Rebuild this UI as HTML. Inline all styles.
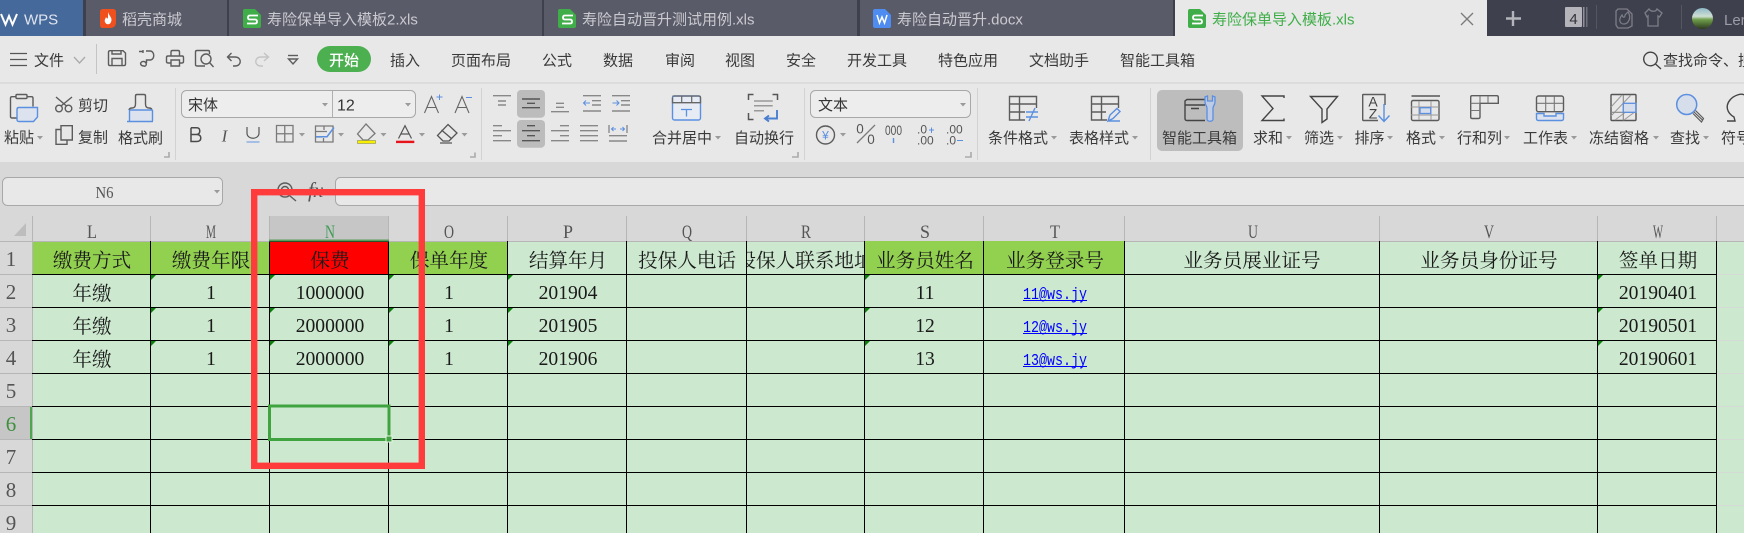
<!DOCTYPE html>
<html><head><meta charset="utf-8"><style>
html,body{margin:0;padding:0;width:1744px;height:533px;overflow:hidden;background:#d8d8d8}
svg{display:block;position:absolute;left:0;top:0}
.s{font-family:"Liberation Sans","Noto Sans CJK SC",sans-serif}
.t{font-size:15px;fill:#3a3a3a}
.tb{font-size:15px;fill:#c9cad0}
.c{font-family:"Liberation Serif","Noto Serif CJK SC",serif;font-size:19.6px;fill:#1a1a1a;text-anchor:middle}
.h{font-family:"Liberation Serif",serif;font-size:19px;fill:#555;text-anchor:middle}
.r{font-family:"Liberation Serif",serif;font-size:21px;fill:#555;text-anchor:middle}
.i{fill:none;stroke:#5c5c5c;stroke-width:1.4}
.b{fill:none;stroke:#5b8fe0;stroke-width:1.4}
.f{fill:#dde3ee;stroke:#5b8fe0;stroke-width:1.4}
.g{fill:none;stroke:#7a7a7a;stroke-width:1.3}
.a{fill:#9a9a9a;stroke:none}
</style></head><body>
<svg width="1744" height="533" viewBox="0 0 1744 533" xmlns="http://www.w3.org/2000/svg" class="s">
<defs>
<linearGradient id="av" x1="0" y1="0" x2="0" y2="1"><stop offset="0" stop-color="#8fb8c8"/><stop offset=".4" stop-color="#cfe0d4"/><stop offset=".55" stop-color="#6f9e4c"/><stop offset="1" stop-color="#2e3a20"/></linearGradient>
<clipPath id="cr"><rect x="747" y="242" width="117" height="32"/></clipPath>
</defs>
<!-- backgrounds -->
<rect x="0" y="0" width="1744" height="36" fill="#3e404d"/>
<rect x="0" y="0" width="83" height="36" fill="#46699b"/>
<rect x="86" y="0" width="141" height="36" fill="#5a5b68"/>
<rect x="229" y="0" width="313" height="36" fill="#5a5b68"/>
<rect x="544" y="0" width="313" height="36" fill="#5a5b68"/>
<rect x="860" y="0" width="313" height="36" fill="#5a5b68"/>
<rect x="1175" y="0" width="312" height="36" fill="#e8e8e8"/>
<rect x="0" y="36" width="1744" height="126" fill="#e8e8e8"/>
<rect x="0" y="82" width="1744" height="2" fill="#dcdcdc"/>
<rect x="0" y="162" width="1744" height="79" fill="#d8d8d8"/>
<!-- tab bar -->
<path d="M1 14L5.5 24.5L9 16L12.5 24.5L17 14" fill="none" stroke="#fff" stroke-width="2"/>
<text x="24" y="24.5" font-size="15" fill="#dfe4ee">WPS</text>
<path d="M103 9H113Q116 9 116 12V22Q116 28 110 28H103Q100 28 100 25V12Q100 9 103 9Z" fill="#f0501e"/>
<path d="M108 12C109 16 113 18 111 22C110 25 106 25 105 22C104 20 106 18 106 17C107 19 108 19 108 17Z" fill="#fff"/>
<text x="122" y="24.5" class="tb">稻壳商城</text>
<g id="sg"><path d="M245 9H255L261 15V26Q261 28 259 28H245Q243 28 243 26V11Q243 9 245 9Z" fill="#3fae49"/><path d="M258 15.5H250Q248 15.5 248 17.5V17.6Q248 19.5 250 19.5H255Q257 19.5 257 21.5V21.6Q257 23.5 255 23.5H247" fill="none" stroke="#fff" stroke-width="1.8"/></g>
<text x="267" y="24.5" class="tb">寿险保单导入模板2.xls</text>
<g transform="translate(315 0)"><path d="M245 9H255L261 15V26Q261 28 259 28H245Q243 28 243 26V11Q243 9 245 9Z" fill="#3fae49"/><path d="M258 15.5H250Q248 15.5 248 17.5V17.6Q248 19.5 250 19.5H255Q257 19.5 257 21.5V21.6Q257 23.5 255 23.5H247" fill="none" stroke="#fff" stroke-width="1.8"/></g>
<text x="582" y="24.5" class="tb">寿险自动晋升测试用例.xls</text>
<path d="M875 9H885L891 15V26Q891 28 889 28H875Q873 28 873 26V11Q873 9 875 9Z" fill="#4f8cf2"/><path d="M877 15L879.5 23L882 17L884.5 23L887 15" fill="none" stroke="#fff" stroke-width="1.5"/>
<text x="897" y="24.5" class="tb">寿险自动晋升.docx</text>
<g transform="translate(945 0)"><path d="M245 9H255L261 15V26Q261 28 259 28H245Q243 28 243 26V11Q243 9 245 9Z" fill="#3fae49"/><path d="M258 15.5H250Q248 15.5 248 17.5V17.6Q248 19.5 250 19.5H255Q257 19.5 257 21.5V21.6Q257 23.5 255 23.5H247" fill="none" stroke="#fff" stroke-width="1.8"/></g>
<text x="1212" y="24.5" font-size="15" fill="#3fae49">寿险保单导入模板.xls</text>
<path d="M1461 13L1473 25M1473 13L1461 25" stroke="#7a7a7a" stroke-width="1.3"/>
<path d="M1513 11V26M1506 18.5H1521" stroke="#b4b5bb" stroke-width="2.4"/>
<rect x="1565" y="7" width="17" height="20" rx="1" fill="#b4b4ba"/><rect x="1583" y="7" width="1.5" height="20" fill="#8f9098"/><rect x="1586" y="7" width="1.5" height="20" fill="#6f707a"/>
<text x="1573.5" y="24" font-size="15" fill="#33343c" text-anchor="middle">4</text>
<rect x="1596" y="5" width="1" height="24" fill="#55565f"/>
<path d="M1618 9H1627L1632 14V26L1628 28H1618L1616 25V11Z" fill="none" stroke="#7d7e87" stroke-width="1.3"/>
<path d="M1628 12C1632 18 1628 24 1624 24C1620 24 1618 20 1622 15C1623 18 1625 18 1625 15Z" fill="none" stroke="#7d7e87" stroke-width="1.2"/>
<path d="M1649 9L1645 13L1647 17L1648 16V26H1658V16L1659.5 17L1662 13L1657 9C1656 12 1651 12 1649 9Z" fill="none" stroke="#7d7e87" stroke-width="1.3"/>
<rect x="1681" y="5" width="1" height="24" fill="#55565f"/>
<circle cx="1702.5" cy="18.5" r="10.5" fill="url(#av)"/>
<text x="1724" y="25" font-size="15" fill="#9b9ca5">Ler</text>

<!-- menu row -->
<path d="M10 53.5H27M10 59.5H27M10 65.5H27" stroke="#555" stroke-width="1.3"/>
<text x="34" y="65.5" class="t">文件</text>
<path d="M74 57L79.5 63L85 57" fill="none" stroke="#aaa" stroke-width="1.3"/>
<rect x="96" y="44" width="1" height="30" fill="#c4c4c4"/>
<path d="M110 50.7H123L125.500 53V64Q125.500 65.600 124 65.600H110Q108.500 65.600 108.500 64V52.300Q108.500 50.700 110 50.700ZM112 65.500V58.500H122V65.500M112 51V54H121V51" class="i"/>
<path d="M139 51.5H143M143 50V53M144 66C141 66 140 64 141 62.5C142 61 145 61 146 63C147 65 145 67 144 66ZM146 51H150C155 51 155 60 150 60H146.5V63" class="i"/>
<path d="M171 56V52Q171 50.5 172.5 50.5H178Q179.5 50.5 179.5 52V56M171 63H168Q166.5 63 166.5 61.5V57.5Q166.5 56 168 56H182Q183.5 56 183.5 57.5V61.5Q183.5 63 182 63H179.5M171 60H179.5V66H171Z" class="i"/>
<path d="M205 66H197Q195.5 66 195.5 64.5V52Q195.5 50.5 197 50.5H208Q209.5 50.5 209.5 52V54" class="i"/><circle cx="206" cy="59" r="5" class="i"/><path d="M209.5 62.5L213.5 67" class="i"/>
<path d="M231.5 53L227.5 57L231.5 61M227.5 57H235C242 57 242 66 235 66H233" class="i"/>
<path d="M264 53L268.5 57L264 61M268.5 57H261C254 57 254 66 261 66H263" fill="none" stroke="#c4c4c4" stroke-width="1.4"/>
<path d="M288 55.5H298" class="i"/><path d="M288.5 59H297.5L293 64Z" class="i"/>
<rect x="317" y="46" width="54" height="26" rx="13" fill="#4caf50"/>
<text x="329" y="65.5" font-size="15" fill="#fff" font-weight="500">开始</text>
<text x="390" y="65.5" class="t">插入</text>
<text x="451" y="65.5" class="t">页面布局</text>
<text x="542" y="65.5" class="t">公式</text>
<text x="603" y="65.5" class="t">数据</text>
<text x="665" y="65.5" class="t">审阅</text>
<text x="725" y="65.5" class="t">视图</text>
<text x="786" y="65.5" class="t">安全</text>
<text x="847" y="65.5" class="t">开发工具</text>
<text x="938" y="65.5" class="t">特色应用</text>
<text x="1029" y="65.5" class="t">文档助手</text>
<text x="1120" y="65.5" class="t">智能工具箱</text>
<circle cx="1650.5" cy="59" r="6.8" class="i" style="stroke:#444"/><path d="M1655.5 64L1661 69" class="i" style="stroke:#444"/>
<text x="1663" y="65.5" class="t">查找命令、搜索模板</text>

<!-- ribbon separators -->
<g fill="#d2d2d2"><rect x="175" y="88" width="1" height="72"/><rect x="481" y="88" width="1" height="72"/><rect x="804" y="88" width="1" height="72"/><rect x="977" y="88" width="1" height="72"/><rect x="1150" y="88" width="1" height="72"/></g>

<!-- clipboard -->
<path d="M15.5 96.7H12Q10.5 96.7 10.5 98.2V116.5Q10.500 118 12 118H16.5M27.5 96.7H31.5Q33 96.7 33 98.2V106.5" class="i"/>
<rect x="16" y="94.5" width="11" height="4" rx="1" class="i"/>
<path d="M19 107.500H37.500V117L33.500 121.500H19Q17 121.500 17 119.500V109.500Q17 107.500 19 107.500Z" class="f"/>
<circle cx="59" cy="108.500" r="3.300" class="i"/><circle cx="68.500" cy="108.500" r="3.300" class="i"/>
<path d="M56 97L66.500 106M72 97L61 106" class="i"/>
<text x="78" y="110.5" class="t">剪切</text>
<path d="M61 129.500H56V144.300H67V140M61 125.700H72.300V140H61Z" class="i"/>
<text x="78" y="142.5" class="t">复制</text>
<path d="M135.500 104V96Q135.500 94.500 137 94.500H144Q145.500 94.500 145.500 96V104Q145.500 108 149 108Q151.500 108 152 110M135.500 104Q135.500 108 132 108Q129.500 108 129 110" class="i"/>
<rect x="129.500" y="110" width="23" height="11" fill="#dde3ee"/>
<path d="M129.500 110H152.500M129.500 110V121M152.500 110V121M127 121.500H153" class="b"/>
<text x="4" y="142.5" class="t">粘贴</text><path class="a" d="M37 136H43L40 139.5Z"/>
<text x="118" y="143" class="t">格式刷</text>
<path d="M169 152V157H164" fill="none" stroke="#aaa" stroke-width="1.6"/>

<!-- font -->
<rect x="181.5" y="90.5" width="234" height="27" rx="5" fill="#ededed" stroke="#a8a8a8"/>
<rect x="332" y="91" width="1" height="26" fill="#b0b0b0"/>
<text x="188" y="110" font-size="15" fill="#333">宋体</text>
<text x="337" y="110.5" font-size="16" fill="#333">12</text>
<path class="a" d="M322 103H328L325 106.5Z"/><path class="a" d="M405 103H411L408 106.5Z"/>
<path d="M424.5 113L431.5 96.500L438.5 113M427 107.500H436" fill="none" stroke="#666" stroke-width="1.100"/><path d="M436.500 97H442.500M439.500 94.500V100" stroke="#5b8fe0" stroke-width="1"/>
<path d="M455 113L462 96.500L469 113M457.500 107.500H466.500" fill="none" stroke="#666" stroke-width="1.100"/><path d="M466 97.500H472" stroke="#5b8fe0" stroke-width="1"/>
<path d="M191 127.800H196.500Q199.800 127.800 199.800 131T196.500 134.500H191M196.500 134.500Q200.800 134.500 200.800 138T196.500 141.500H191V127.800" fill="none" stroke="#4a4a4a" stroke-width="1.500"/>
<text x="224.500" y="141.500" font-size="17" fill="#555" font-style="italic" font-family="Liberation Serif,serif" text-anchor="middle">I</text>
<path d="M247 127V133C247 140 259 140 259 133V127" fill="none" stroke="#555" stroke-width="1.200"/><path d="M246.500 142H259.500" stroke="#8fb0e6" stroke-width="1.500"/>
<path d="M276.500 125.500H293V142H276.500ZM284.750 125.500V142M276.500 133.750H293" class="g"/>
<path class="a" d="M299 133H305L302 136.5Z"/>
<path d="M315.5 126H333V142H315.5ZM315.5 131.500H327M324 126V130M323.500 138V142M315.5 137H322" class="g"/><path d="M316 136.700H327L334 127.500" fill="none" stroke="#5b8fe0" stroke-width="1.500"/>
<path class="a" d="M338 133H344L341 136.5Z"/>
<path d="M366 124L375 133.500L368 140H363L357.500 134Z" class="g"/>
<rect x="357.500" y="140.500" width="18" height="3" fill="#f6f000" stroke="#8f8f50" stroke-width=".6"/>
<path class="a" d="M380.500 133H386.500L383.500 136.5Z"/>
<path d="M398.500 138.500L405 125.700L411.500 138.500M400.500 134H409.500" fill="none" stroke="#555" stroke-width="1.200"/>
<rect x="396" y="140.700" width="18.300" height="2.400" fill="#e8141c"/>
<path class="a" d="M419 133H425L422 136.5Z"/>
<path d="M448 124.500L457 133L449 141H443L437.500 135.500ZM441.500 130L452 139M440 143H452" class="g" style="stroke:#555"/>
<path class="a" d="M461.500 133H467.500L464.500 136.5Z"/>
<path d="M475 152.500V157H470" fill="none" stroke="#aaa" stroke-width="1.6"/>

<!-- alignment -->
<rect x="517" y="90" width="28" height="27.700" rx="4" fill="#bcbcbc"/>
<rect x="517" y="120" width="28" height="27.700" rx="4" fill="#bcbcbc"/>
<g stroke="#888" stroke-width="1.400" fill="none">
<path d="M493 95.700H511M498 101H506M498 105H506"/>
<path d="M522 99H540M527 103.300H535M522 107.700H540" stroke="#555"/>
<path d="M556 103.300H564M556 107.300H564M551 111.700H569"/>
<path d="M583 95.700H601M592 100.700H601M592 105H601M583 111H601"/>
<path d="M612 95.700H630M621 100.700H630M621 105H630M612 111H630"/>
<path d="M493 125.700H502M493 130.700H511M493 135.700H502M493 140.700H511"/>
<path d="M527 125.700H535M522 130.700H540M527 135.700H535M522 140.700H540" stroke="#555"/>
<path d="M560 125.700H569M551 130.700H569M560 135.700H569M551 140.700H569"/>
<path d="M580 125.700H598M580 130.700H598M580 135.700H598M580 140.700H598"/>
<path d="M609 135.700H627M609 141H627"/>
<path d="M609 125V133M627 125V133" stroke="#666" stroke-width="1"/>
</g>
<path d="M590 103H583.500M586 100.500L583.500 103L586 105.500M612.500 103H619M616.500 100.500L619 103L616.500 105.500M611.500 129H616M624.500 129H620M613.500 127L611.500 129L613.500 131M622.500 127L624.500 129L622.500 131" fill="none" stroke="#5b8fe0" stroke-width="1"/>

<!-- merge/wrap -->
<rect x="672.5" y="96" width="28" height="24" rx="2" fill="#e6ebf4" stroke="#5b8fe0" stroke-width="1.4"/>
<path d="M673 96.500Q672.500 96 674 96H699Q700.500 96 700.500 97.500V102.700H672.500V97.500" fill="none" stroke="#666" stroke-width="1.300"/><path d="M681.7 96V102.700M691.7 96V102.700" stroke="#666" stroke-width="1.200"/>
<path d="M681 109.500H692M686.500 109.500V116.500" stroke="#5b8fe0" stroke-width="1.300"/>
<path d="M753.500 94.500H748.500V100M772.500 94.500H777.500V100M748.500 113V119.500H753.500" fill="none" stroke="#555" stroke-width="1.500"/>
<path d="M754 101H772.700M754 105.700H772.700M754 110.700H764" stroke="#999" stroke-width="1.500"/>
<path d="M777 110V118.500H765.500M769 115.500L765 118.500L769 121.500" fill="none" stroke="#4a7fd0" stroke-width="1.900"/>
<text x="652" y="143" class="t">合并居中</text><path class="a" d="M715 136H721L718 139.5Z"/>
<text x="734" y="143" class="t">自动换行</text>
<path d="M798 152V157H792" fill="none" stroke="#aaa" stroke-width="1.6"/>

<!-- number -->
<rect x="810.5" y="90.5" width="160" height="27" rx="5" fill="#ededed" stroke="#a8a8a8"/>
<text x="818" y="110" font-size="15" fill="#333">文本</text>
<path class="a" d="M960 103H966L963 106.5Z"/>
<circle cx="825.5" cy="135" r="9" class="i"/><text x="825.5" y="139.5" font-size="12" fill="#5b8fe0" text-anchor="middle">¥</text>
<path class="a" d="M840 133H846L843 136.5Z"/>
<text x="860" y="133.500" font-size="13.500" fill="#555" text-anchor="middle">0</text><text x="871" y="144" font-size="13.500" fill="#555" text-anchor="middle">0</text><path d="M875 125L857 143" class="g"/>
<text x="893.5" y="135" font-size="13.500" fill="#555" text-anchor="middle" textLength="17" lengthAdjust="spacingAndGlyphs">000</text><path d="M893.5 138V143" stroke="#5b8fe0" stroke-width="1.400"/>
<text x="917" y="133.500" font-size="12" fill="#555">.0</text><path d="M929 130H934M931.5 127.500V133" stroke="#5b8fe0"/><text x="917" y="144.500" font-size="12" fill="#555">.00</text>
<text x="946" y="133.500" font-size="12" fill="#555">.00</text><text x="946" y="144.500" font-size="12" fill="#555">.0</text><path d="M957 140.500H963" stroke="#5b8fe0"/>
<path d="M971 152V157H965" fill="none" stroke="#aaa" stroke-width="1.6"/>

<!-- cond format -->
<path d="M1025 120H1009.5V96.500H1036.5V108M1009.5 104H1036.5M1019.5 96.500V120M1009.5 112H1025" class="i"/>
<path d="M1026 112H1038M1026 117H1038M1035 108L1029 121" class="b"/>
<text x="988" y="143" class="t">条件格式</text><path class="a" d="M1051 136H1057L1054 139.5Z"/>
<path d="M1107 120H1091.5V96.500H1118.5V108M1091.5 104H1118.5M1101.5 96.500V120M1091.5 112H1106" class="i"/>
<path d="M1108 121L1110 115L1117 108.500L1120 111.500L1113 118.500ZM1108 121H1120" class="b"/>
<text x="1069" y="143" class="t">表格样式</text><path class="a" d="M1132 136H1138L1135 139.5Z"/>

<!-- smart toolbox -->
<rect x="1157" y="90" width="86" height="61" rx="5" fill="#bdbdbd"/>
<path d="M1205 105H1185V118.500Q1185 120.500 1187 120.500H1205M1185 105V101L1187 99.500H1205M1191 108.500H1199" class="i" style="stroke:#444"/>
<path d="M1205 97V102C1205 105 1207 106 1207 108V119C1207 122 1213 122 1213 119V108C1213 106 1215 105 1215 102V97L1212.5 96V101H1207.5V96Z" fill="#bdcbe6" stroke="#5b8fe0" stroke-width="1.3"/>
<text x="1162" y="143" class="t">智能工具箱</text>

<path d="M1284 98V96H1262L1273 108.500L1262 120.500H1284V118.500" class="i" style="stroke:#444"/>
<text x="1253" y="143" class="t">求和</text><path class="a" d="M1286 136H1292L1289 139.5Z"/>
<path d="M1310.5 96.500H1337.5L1327 109V119L1322 122.500V109Z" class="i" style="stroke:#444"/>
<text x="1304" y="143" class="t">筛选</text><path class="a" d="M1337 136H1343L1340 139.5Z"/>
<path d="M1378 120.500H1363.500Q1362.700 120.500 1362.700 119.500V95Q1362.700 94.500 1363.500 94.500H1385V105" class="i"/>
<text x="1373" y="106.700" font-size="14" fill="#444" text-anchor="middle">A</text><text x="1373" y="118.700" font-size="14" fill="#444" text-anchor="middle">Z</text>
<path d="M1384 104V121M1378.500 115.500L1384 121.500L1389.500 115.500" class="b"/>
<text x="1354.5" y="143" class="t">排序</text><path class="a" d="M1387 136H1393L1390 139.5Z"/>
<path d="M1411.500 96H1440" stroke="#555" stroke-width="1.4"/>
<rect x="1411.5" y="100.500" width="27.500" height="20" rx="1.500" class="i"/>
<path d="M1411 107H1439M1411 115H1439M1419 101V120M1431 101V120" stroke="#999" stroke-width="1"/>
<rect x="1420" y="107.700" width="10.700" height="5.800" fill="#d6deec" stroke="#5b8fe0" stroke-width="1.300"/>
<text x="1406" y="143" class="t">格式</text><path class="a" d="M1439 136H1445L1442 139.5Z"/>
<path d="M1472 95.700H1496.800Q1498.300 95.700 1498.300 97.200V103.300H1480V117Q1480 118.500 1478.500 118.500H1472Q1470.700 118.500 1470.700 117V97.200Q1470.700 95.700 1472 95.700Z" class="i"/>
<path d="M1470.7 103.300H1480M1470.7 110.500H1480M1480 96V103.300M1488 96V103.300" stroke="#777" stroke-width="1.100"/>
<text x="1457" y="143" class="t">行和列</text><path class="a" d="M1504 136H1510L1507 139.5Z"/>
<rect x="1536.5" y="96" width="27" height="15.700" rx="2" class="i"/>
<path d="M1545.7 96.500V111M1554.3 96.500V111M1537 103.300H1563" stroke="#777" stroke-width="1.100"/>
<path d="M1536.5 113.500V118.500Q1536.5 120.500 1538.5 120.500H1561.5Q1563.5 120.500 1563.5 118.500V113.500H1556V116H1544V113.500Z" class="f"/>
<text x="1523" y="143" class="t">工作表</text><path class="a" d="M1571 136H1577L1574 139.5Z"/>
<rect x="1611" y="94.500" width="25" height="26" rx="1" fill="none" stroke="#555" stroke-width="1.400"/>
<path d="M1611 107L1622 95M1611 116L1631 95M1615 120L1627 111M1624 120L1636 111" stroke="#999" stroke-width="1"/>
<path d="M1623.3 95V120.500M1611 112.300H1636" stroke="#888" stroke-width="1.100"/>
<rect x="1623.3" y="103.300" width="12.500" height="9" fill="#d6deec" stroke="#5b8fe0" stroke-width="1.300"/>
<text x="1589" y="143" class="t">冻结窗格</text><path class="a" d="M1653 136H1659L1656 139.5Z"/>
<circle cx="1686.7" cy="104.500" r="10" fill="#d6deec" stroke="#5b8fe0" stroke-width="1.500"/>
<path d="M1694 112L1703 120.500M1695.5 110.500L1703.500 118.500L1701.500 122L1693 113.500" fill="none" stroke="#5c5c5c" stroke-width="1.200"/>
<text x="1670" y="143" class="t">查找</text><path class="a" d="M1703 136H1709L1706 139.5Z"/>
<path d="M1727 121H1735L1734 117C1727 113 1725 106 1730 100C1734 95 1742 93 1744 95" class="i" style="stroke:#444"/>
<text x="1721" y="143" class="t">符号</text>

<!-- formula bar -->
<rect x="2.5" y="177.5" width="220" height="28" rx="5" fill="#e8e8e8" stroke="#a8a8a8"/>
<text x="104.5" y="198" font-family="Liberation Serif,serif" font-size="17" fill="#555" text-anchor="middle" textLength="18" lengthAdjust="spacingAndGlyphs">N6</text>
<path class="a" d="M214 190H220L217 193.5Z"/>
<circle cx="285" cy="190" r="7" class="i"/><circle cx="285" cy="190" r="3.5" class="i"/><path d="M290 196L296 201" class="i"/>
<text x="308" y="197" font-family="Liberation Serif,serif" font-style="italic" font-size="21" fill="#555">fx</text>
<rect x="335.5" y="177.5" width="1420" height="28" rx="5" fill="#e8e8e8" stroke="#a8a8a8"/>

<!-- sheet -->
<rect x="32" y="241" width="1712" height="292" fill="#cce8cf"/>
<rect x="32" y="241" width="118" height="33" fill="#92d050"/>
<rect x="150" y="241" width="119" height="33" fill="#92d050"/>
<rect x="269" y="241" width="120" height="33" fill="#ff0000"/>
<rect x="389" y="241" width="119" height="33" fill="#92d050"/>
<rect x="864" y="241" width="260" height="33" fill="#92d050"/>
<rect x="269" y="216" width="120" height="24" fill="#c6c6c6"/>
<rect x="0" y="406" width="30" height="33" fill="#c6c6c6"/>
<rect x="30" y="406" width="2" height="33" fill="#4da64d"/>
<g shape-rendering="crispEdges">
<path d="M0 241.5H269M389 241.5H508M0 274.5H32M0 307.5H32M0 340.5H32M0 373.5H32M0 406.5H32M0 439.5H32M0 472.5H32M0 505.5H32M32.5 216V533" stroke="#b6b6b6" fill="none"/>
<path d="M150.5 216V241M269.5 216V241M388.5 216V241M507.5 216V241M626.5 216V241M746.5 216V241M864.5 216V241M983.5 216V241M1124.5 216V241M1379.5 216V241M1597.5 216V241M1716.5 216V241M508 241.5H864M1124 241.5H1744" stroke="#b6b6b6" fill="none"/>
<path d="M1717 274.5H1744M1717 307.5H1744M1717 340.5H1744M1717 373.5H1744M1717 406.5H1744M1717 439.5H1744M1717 472.5H1744M1717 505.5H1744" stroke="#d3dbd4"/>
<path d="M32 274.5H1717M32 307.5H1717M32 340.5H1717M32 373.5H1717M32 406.5H1717M32 439.5H1717M32 472.5H1717M32 505.5H1717M150.5 241V533M269.5 241V533M388.5 241V533M507.5 241V533M626.5 241V533M746.5 241V533M864.5 241V533M983.5 241V533M1124.5 241V533M1379.5 241V533M1597.5 241V533M1716.5 241V533M269 241.500H389" stroke="#000" fill="none"/>
</g>
<rect x="269" y="239.5" width="120" height="2" fill="#5a9f5a"/>
<path d="M14 236H26V223Z" fill="#bdbdbd"/>
<!-- letters -->
<g>
<text class="h" x="92" y="238" textLength="10" lengthAdjust="spacingAndGlyphs">L</text>
<text class="h" x="211" y="238" textLength="10" lengthAdjust="spacingAndGlyphs">M</text>
<text class="h" x="330" y="238" textLength="10" lengthAdjust="spacingAndGlyphs" style="fill:#3f9b58">N</text>
<text class="h" x="449" y="238" textLength="10" lengthAdjust="spacingAndGlyphs">O</text>
<text class="h" x="568" y="238" textLength="10" lengthAdjust="spacingAndGlyphs">P</text>
<text class="h" x="687" y="238" textLength="10" lengthAdjust="spacingAndGlyphs">Q</text>
<text class="h" x="806" y="238" textLength="10" lengthAdjust="spacingAndGlyphs">R</text>
<text class="h" x="925" y="238" textLength="10" lengthAdjust="spacingAndGlyphs">S</text>
<text class="h" x="1055" y="238" textLength="10" lengthAdjust="spacingAndGlyphs">T</text>
<text class="h" x="1253" y="238" textLength="10" lengthAdjust="spacingAndGlyphs">U</text>
<text class="h" x="1489" y="238" textLength="10" lengthAdjust="spacingAndGlyphs">V</text>
<text class="h" x="1658" y="238" textLength="10" lengthAdjust="spacingAndGlyphs">W</text>
</g>
<!-- row nums -->
<text class="r" x="11" y="266">1</text><text class="r" x="11" y="299">2</text><text class="r" x="11" y="332">3</text><text class="r" x="11" y="365">4</text><text class="r" x="11" y="398">5</text><text class="r" x="11" y="431" style="fill:#3f8f3f">6</text><text class="r" x="11" y="464">7</text><text class="r" x="11" y="497">8</text><text class="r" x="11" y="530">9</text>
<!-- triangles -->
<g fill="#0a800a">
<path d="M151 275H156L151 280ZM270 275H275L270 280ZM389 275H394L389 280ZM508 275H513L508 280ZM865 275H870L865 280ZM1598 275H1603L1598 280Z"/>
<path d="M151 308H156L151 313ZM270 308H275L270 313ZM389 308H394L389 313ZM508 308H513L508 313ZM865 308H870L865 313ZM1598 308H1603L1598 313Z"/>
<path d="M151 341H156L151 346ZM270 341H275L270 346ZM389 341H394L389 346ZM508 341H513L508 346ZM865 341H870L865 346ZM1598 341H1603L1598 346Z"/>
</g>
<!-- header cells -->
<text class="c" x="92" y="267">缴费方式</text>
<text class="c" x="211" y="267">缴费年限</text>
<text class="c" x="330" y="267">保费</text>
<text class="c" x="449" y="267">保单年度</text>
<text class="c" x="568" y="267">结算年月</text>
<text class="c" x="687" y="267">投保人电话</text>
<g clip-path="url(#cr)"><text class="c" x="805" y="267">投保人联系地址</text></g>
<text class="c" x="925" y="267">业务员姓名</text>
<text class="c" x="1055" y="267">业务登录号</text>
<text class="c" x="1252" y="267">业务员展业证号</text>
<text class="c" x="1489" y="267">业务员身份证号</text>
<text class="c" x="1658" y="267">签单日期</text>
<!-- data -->
<text class="c" x="92" y="300">年缴</text><text class="c" x="92" y="333">年缴</text><text class="c" x="92" y="366">年缴</text>
<text class="c" x="211" y="299">1</text><text class="c" x="211" y="332">1</text><text class="c" x="211" y="365">1</text>
<text class="c" x="330" y="299">1000000</text><text class="c" x="330" y="332">2000000</text><text class="c" x="330" y="365">2000000</text>
<text class="c" x="449" y="299">1</text><text class="c" x="449" y="332">1</text><text class="c" x="449" y="365">1</text>
<text class="c" x="568" y="299">201904</text><text class="c" x="568" y="332">201905</text><text class="c" x="568" y="365">201906</text>
<text class="c" x="925" y="299">11</text><text class="c" x="925" y="332">12</text><text class="c" x="925" y="365">13</text>
<g font-family="Liberation Mono,monospace" font-size="17" fill="#0000ff" text-anchor="middle">
<text x="1055" y="299" textLength="64" lengthAdjust="spacingAndGlyphs">11@ws.jy</text>
<text x="1055" y="332" textLength="64" lengthAdjust="spacingAndGlyphs">12@ws.jy</text>
<text x="1055" y="365" textLength="64" lengthAdjust="spacingAndGlyphs">13@ws.jy</text>
</g>
<g fill="#0000ff"><rect x="1023" y="300" width="64" height="1"/><rect x="1023" y="333" width="64" height="1"/><rect x="1023" y="366" width="64" height="1"/></g>
<text class="c" x="1658" y="299">20190401</text><text class="c" x="1658" y="332">20190501</text><text class="c" x="1658" y="365">20190601</text>
<!-- selection -->
<rect x="269.5" y="406" width="119.5" height="33.5" fill="none" stroke="#3fa33f" stroke-width="3"/>
<rect x="386" y="436" width="6" height="6" fill="#3fa33f" stroke="#e8f4e8" stroke-width="1"/>
<!-- red annotation -->
<rect x="254.2" y="192.2" width="167.6" height="273.6" fill="none" stroke="#ff3b3b" stroke-width="6.4"/>
</svg>
</body></html>
